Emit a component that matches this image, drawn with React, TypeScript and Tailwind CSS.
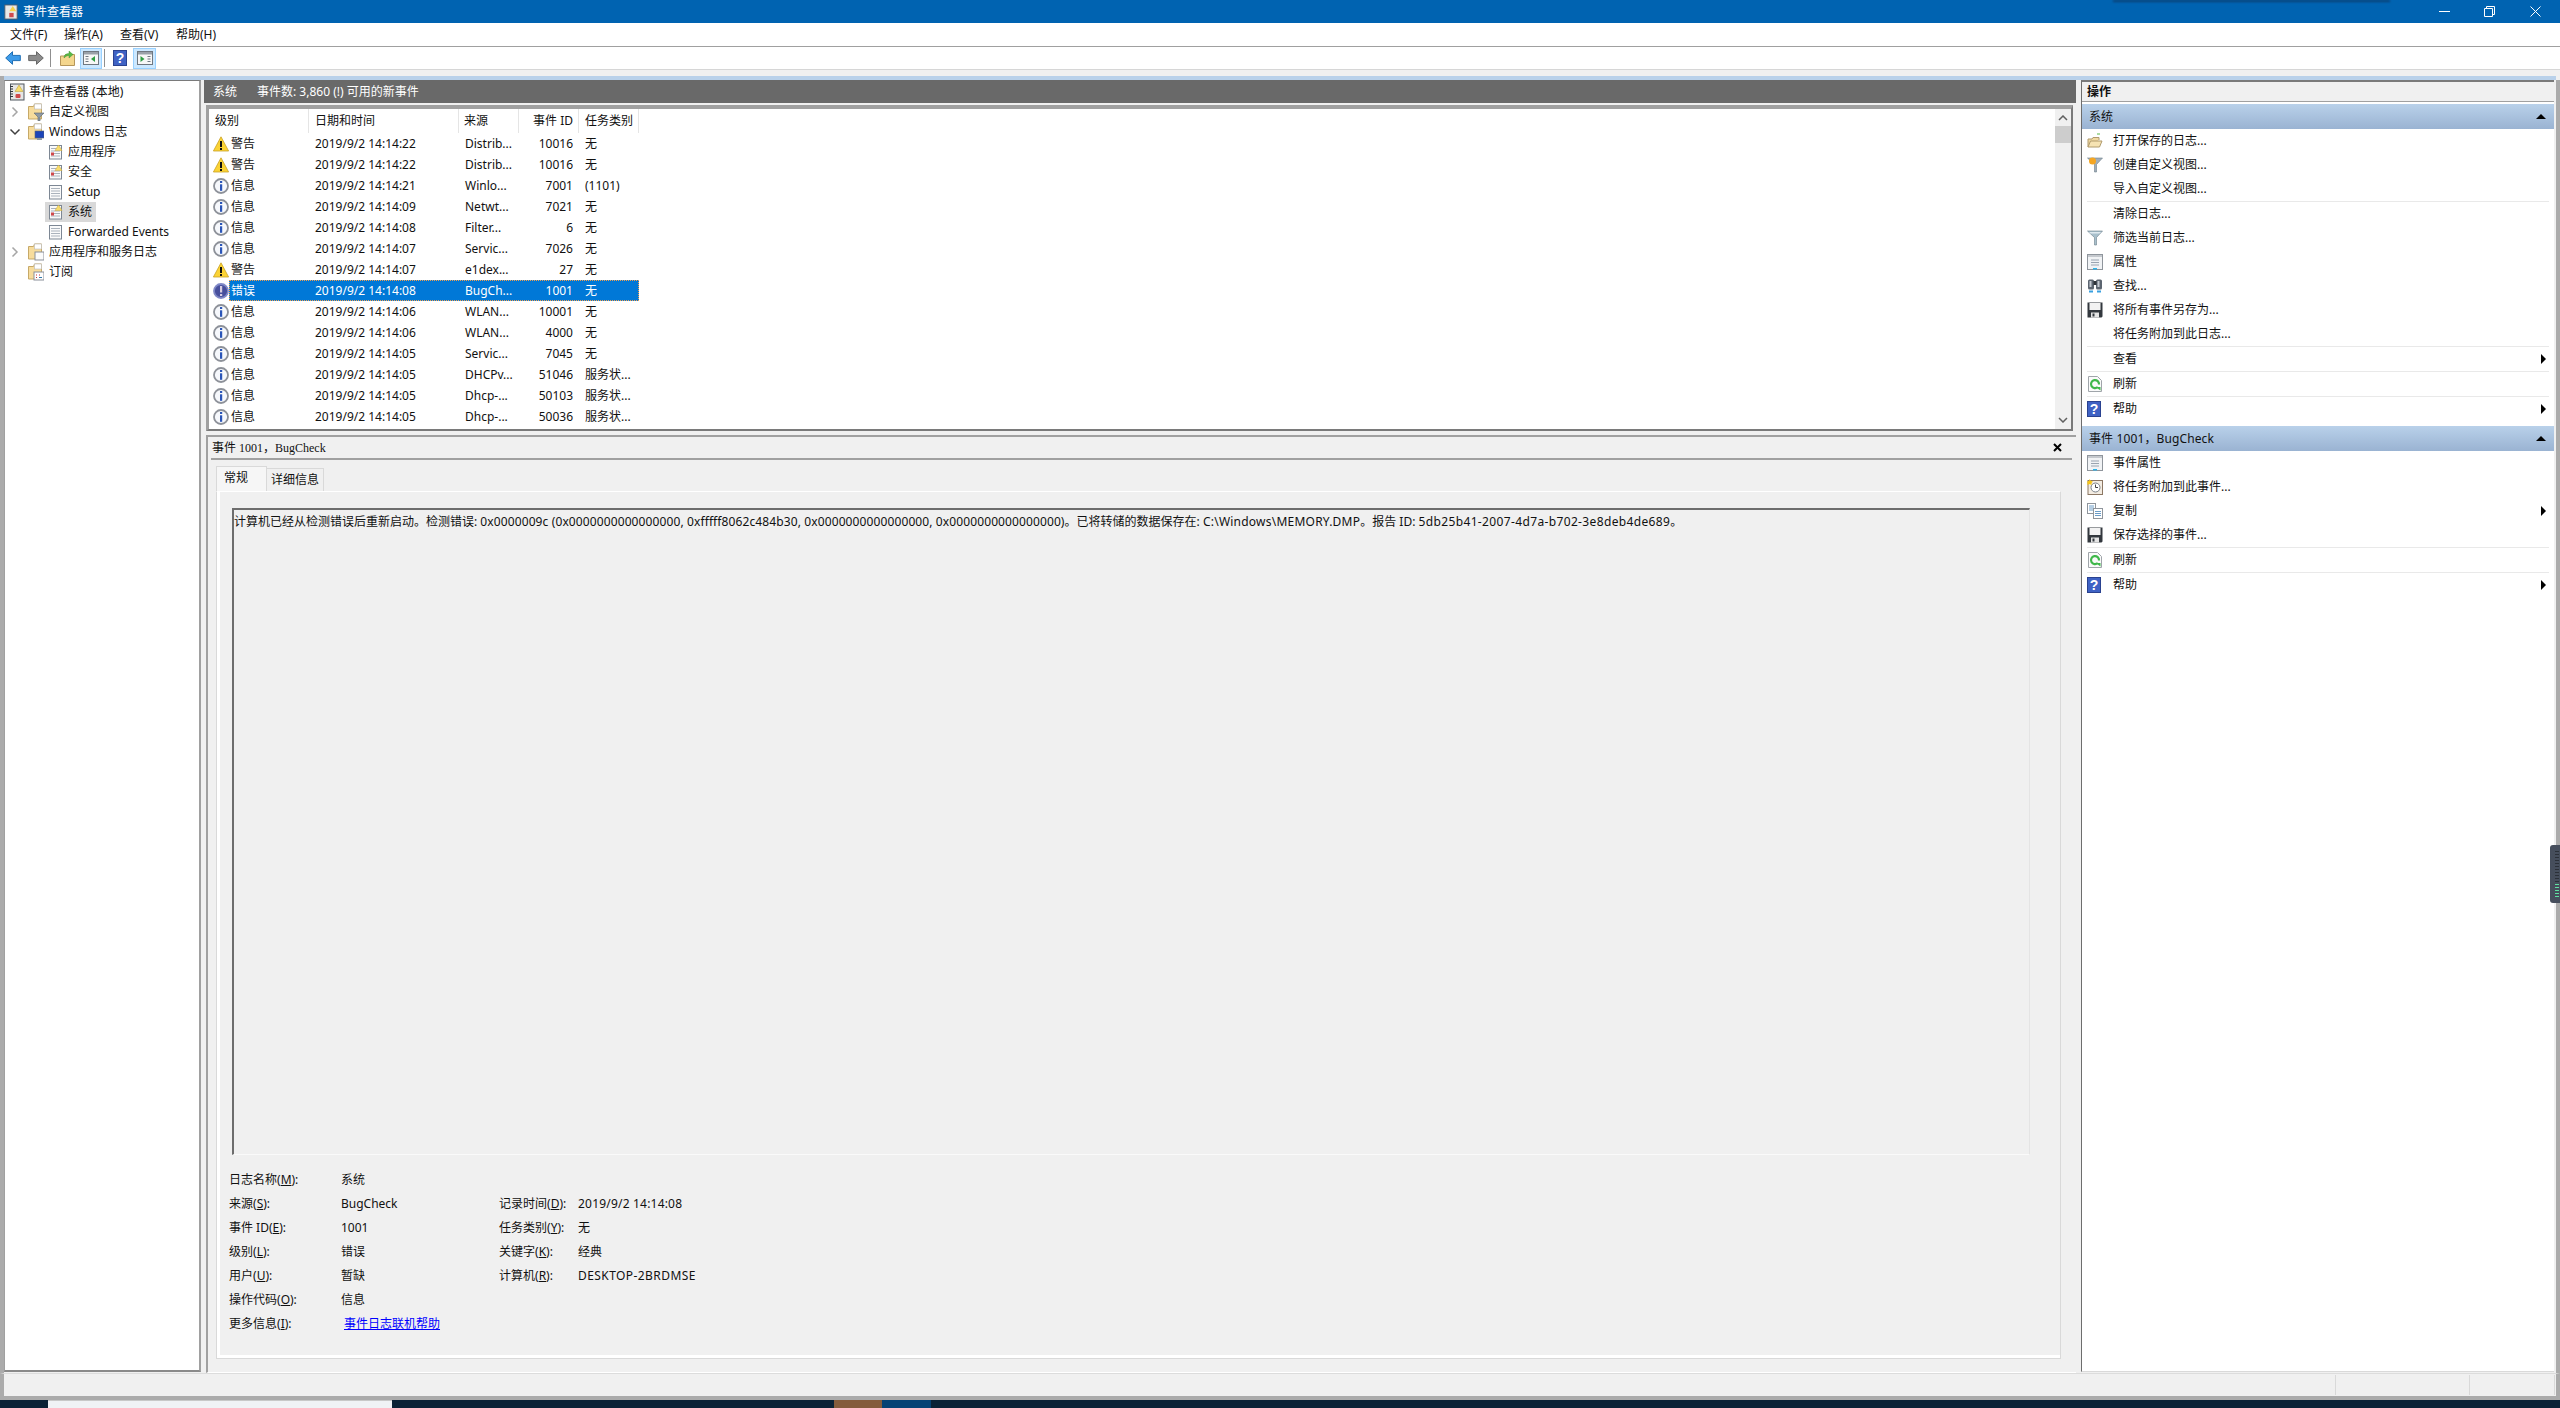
import React from 'react';

const eventRows = [
  ['warn', '警告', '2019/9/2 14:14:22', 'Distrib...', '10016', '无'],
  ['warn', '警告', '2019/9/2 14:14:22', 'Distrib...', '10016', '无'],
  ['info', '信息', '2019/9/2 14:14:21', 'Winlo...', '7001', '(1101)'],
  ['info', '信息', '2019/9/2 14:14:09', 'Netwt...', '7021', '无'],
  ['info', '信息', '2019/9/2 14:14:08', 'Filter...', '6', '无'],
  ['info', '信息', '2019/9/2 14:14:07', 'Servic...', '7026', '无'],
  ['warn', '警告', '2019/9/2 14:14:07', 'e1dex...', '27', '无'],
  ['error', '错误', '2019/9/2 14:14:08', 'BugCh...', '1001', '无'],
  ['info', '信息', '2019/9/2 14:14:06', 'WLAN...', '10001', '无'],
  ['info', '信息', '2019/9/2 14:14:06', 'WLAN...', '4000', '无'],
  ['info', '信息', '2019/9/2 14:14:05', 'Servic...', '7045', '无'],
  ['info', '信息', '2019/9/2 14:14:05', 'DHCPv...', '51046', '服务状...'],
  ['info', '信息', '2019/9/2 14:14:05', 'Dhcp-...', '50103', '服务状...'],
  ['info', '信息', '2019/9/2 14:14:05', 'Dhcp-...', '50036', '服务状...'],
];

// Icons
function WarnIcon() {
  return (
    <svg width="16" height="16" viewBox="0 0 16 16" className="shrink-0">
      <path d="M8 .8 15.6 15H.4z" fill="#fbd335" stroke="#c9a227" strokeWidth="0.8" />
      <rect x="7" y="5" width="2" height="6" fill="#111" />
      <rect x="7" y="12" width="2" height="2" fill="#111" />
    </svg>
  );
}

function InfoIcon() {
  return (
    <svg width="16" height="16" viewBox="0 0 16 16" className="shrink-0">
      <circle cx="8" cy="8" r="7" fill="#f6f8fc" stroke="#8d9199" strokeWidth="1.8" />
      <rect x="7" y="3" width="2.2" height="2" fill="#2a55b8" />
      <rect x="7" y="6.3" width="2.2" height="6.5" fill="#2a55b8" />
    </svg>
  );
}

function ErrorIcon() {
  return (
    <svg width="16" height="16" viewBox="0 0 16 16" className="shrink-0">
      <circle cx="8" cy="8" r="7" fill="#474f9c" stroke="#7f88c6" strokeWidth="1.8" />
      <rect x="7" y="3" width="2.2" height="6.5" fill="#d9cfe0" />
      <rect x="7" y="11" width="2.2" height="2" fill="#d9cfe0" />
    </svg>
  );
}

function LogIcon({ plain }: { plain?: boolean }) {
  return (
    <svg width="16" height="16" viewBox="0 0 16 16" className="shrink-0">
      <rect x="1.500" y="1.500" width="12" height="13.500" fill="#fafafa" stroke="#7d8794" />
      <path d="M3 4.500h9M3 7h9M3 9.500h9M3 12h9" stroke="#aab2bc" />
      {!plain && <path d="M10.500 1 14 6.500H7z" fill="#f8dc6c" stroke="#c7a73a" strokeWidth="0.5" />}
      {!plain && <rect x="3" y="8.500" width="3" height="3" fill="#d0494c" />}
    </svg>
  );
}

function RootIcon() {
  return (
    <svg width="16" height="18" viewBox="0 0 16 18" className="shrink-0">
      <rect x="1.500" y="1" width="13.500" height="16" fill="#e6e6e6" stroke="#4f565f" />
      <path d="M1 3.500h3M1 6h3M1 8.500h3M1 11h3M1 13.500h3" stroke="#30353b" />
      <path d="M10 2 14 8.500H6z" fill="#f8dc6c" stroke="#b59a30" strokeWidth="0.5" />
      <rect x="6.500" y="11" width="5" height="4" rx="1" fill="#d0494c" />
    </svg>
  );
}

function Folder({ overlay }: { overlay?: 'filter' | 'pc' | 'doc' | 'calendar' }) {
  return (
    <svg width="16" height="18" viewBox="0 0 16 18" className="shrink-0">
      <path d="M.5 3.500h5l1-2.500h7v15H.5z" fill="#f7dc9c" stroke="#c6a968" />
      <rect x="6.500" y="1" width="7" height="5" fill="#fff" stroke="#b9b9b9" strokeWidth="0.6" />
      {overlay === 'filter' && <path d="M6 10h10l-4 4v4h-2v-4z" fill="#8f9aa5" stroke="#5c6670" strokeWidth="0.6" />}
      {overlay === 'pc' && (
        <>
          <rect x="7" y="8" width="9" height="7" fill="#1c44b8" stroke="#5c6670" strokeWidth="0.6" />
          <rect x="9" y="15" width="5" height="2" fill="#8f9aa5" />
        </>
      )}
      {overlay === 'doc' && <rect x="7" y="9" width="9" height="8" fill="#fbfbfb" stroke="#8a8f99" />}
      {overlay === 'calendar' && (
        <>
          <rect x="6" y="9" width="10" height="8" fill="#fff" stroke="#8a8f99" />
          <path d="M8 12h1M11 12h1M8 14.500h1" stroke="#c33" />
          <path d="M11 14.500h3" stroke="#37a" />
        </>
      )}
    </svg>
  );
}

function ArrowIcon({ flip, color, edge }: { flip?: boolean; color: string; edge: string }) {
  return (
    <svg width="16" height="14" viewBox="0 0 16 14" className={flip ? 'shrink-0 -scale-x-100' : 'shrink-0'}>
      <path d="M7.500.7.7 7l6.800 6.300V9.600h7.800V4.400H7.500z" fill={color} stroke={edge} />
    </svg>
  );
}

function PaneIcon({ side }: { side: 'left' | 'right' }) {
  return (
    <svg width="16" height="14" viewBox="0 0 16 14">
      <rect x=".5" y=".5" width="15" height="13" fill="#f7f7f7" stroke="#6f7780" />
      <rect x="1" y="1" width="14" height="2.500" fill="#9aa1a9" />
      {side === 'left' ? (
        <>
          <path d="M2.500 5.500h3M2.500 8h3M2.500 10.500h3" stroke="#6f7780" />
          <path d="M12 5v6L8 8z" fill="#2f9e44" />
        </>
      ) : (
        <>
          <path d="M3.500 5v6L7.500 8z" fill="#2f9e44" />
          <path d="M10.500 5.500h3M10.500 8h3M10.500 10.500h3" stroke="#6f7780" />
        </>
      )}
    </svg>
  );
}

function HelpIcon() {
  return (
    <svg width="14" height="16" viewBox="0 0 14 16" className="shrink-0">
      <rect width="14" height="16" fill="#3f62c4" />
      <rect x=".5" y=".5" width="13" height="15" fill="none" stroke="#2a4290" />
      <text x="7" y="13" textAnchor="middle" fontSize="14" fontWeight="700" fill="#ffffff" fontFamily="Liberation Sans, sans-serif">?</text>
    </svg>
  );
}

function UpFolderIcon() {
  return (
    <svg width="15" height="16" viewBox="0 0 15 16">
      <path d="M.5 6h4l1-1.500h9v11H.5z" fill="#f4d68e" stroke="#b6965a" />
      <path d="M4 8c0-3 2-4.500 5-4.500V1l4 3.500L9 8V5.500C7 5.500 5.500 6.500 4 8z" fill="#58b947" stroke="#2f8a2a" strokeWidth="0.4" />
    </svg>
  );
}

function ActionIcon({ name }: { name?: string }) {
  if (name === 'open')
    return (
      <svg width="16" height="16" viewBox="0 0 16 16">
        <path d="M1 14V6h4l1-1.500h6V7" fill="#f0d9a2" stroke="#b09a6c" />
        <path d="M1 14 3.500 8H15l-2.500 6z" fill="#f6e3b3" stroke="#b09a6c" />
        <path d="M10 1h3" stroke="#58b947" />
      </svg>
    );
  if (name === 'custom' || name === 'filter')
    return (
      <svg width="16" height="16" viewBox="0 0 16 16">
        <path d="M.5 1h15L9.500 7.500V15H7.500V7.500z" fill={name === 'custom' ? '#a2aeb9' : '#a8c0cc'} stroke="#6d7f8c" strokeWidth="0.6" />
        {name === 'custom' ? <circle cx="5.500" cy="4" r="3.500" fill="#f5a623" /> : <path d="M2 2h12l-1.500 1.500h-9z" fill="#dfeaf0" />}
      </svg>
    );
  if (name === 'props')
    return (
      <svg width="16" height="16" viewBox="0 0 16 16">
        <rect x=".5" y=".5" width="15" height="15" fill="#f1f3f5" stroke="#8f959c" />
        <rect x="1" y="1" width="14" height="2" fill="#c5c9ce" />
        <path d="M4 6h8M4 8.500h8M4 11h8" stroke="#9aa4b0" />
        <rect x="6" y="14" width="4" height="1.500" fill="#2fb4e8" />
      </svg>
    );
  if (name === 'find')
    return (
      <svg width="16" height="16" viewBox="0 0 16 16">
        <rect x="1" y="1.500" width="6" height="10" rx="1.500" fill="#5c6570" />
        <rect x="9" y="1.500" width="6" height="10" rx="1.500" fill="#5c6570" />
        <rect x="2.500" y="3" width="2" height="6" fill="#c4cad1" />
        <rect x="10.500" y="3" width="2" height="6" fill="#c4cad1" />
        <rect x="6.500" y="3" width="3" height="4" fill="#2f343a" />
        <path d="M2 13.500h4M10 13.500h4" stroke="#38a0e0" strokeWidth="2" />
      </svg>
    );
  if (name === 'save')
    return (
      <svg width="16" height="16" viewBox="0 0 16 16">
        <path d="M.5.500h15v14l-1 1H.5z" fill="#33383e" />
        <rect x="2.500" y="1" width="11" height="7" fill="#f2f2f2" />
        <rect x="4" y="10.500" width="8" height="5" fill="#e4e4e4" />
        <rect x="5.500" y="11.500" width="2" height="3" fill="#33383e" />
      </svg>
    );
  if (name === 'refresh')
    return (
      <svg width="16" height="16" viewBox="0 0 16 16">
        <path d="M1.500.500h9l4 4v11h-13z" fill="#fafafa" stroke="#a0a5aa" />
        <path d="M10.800 11A4 4 0 1 1 12 8.500" fill="none" stroke="#3fb84a" strokeWidth="2.200" />
        <path d="M8.500 11h5v3.500z" fill="#3fb84a" />
      </svg>
    );
  if (name === 'help') return <HelpIcon />;
  if (name === 'task')
    return (
      <svg width="16" height="16" viewBox="0 0 16 16">
        <rect x="1" y="1.500" width="14.500" height="14" fill="#f3ece2" stroke="#8c7763" />
        <circle cx="8.500" cy="8.500" r="4.500" fill="#fff" stroke="#7a8087" />
        <path d="M8.500 5.500v3h2.500" fill="none" stroke="#444" />
        <path d="M2.500 0 4 2l2 .500-1.500 1.500.200 2-2.200-1-2.200 1 .200-2L0 2.500 2 2z" fill="#f5c518" />
      </svg>
    );
  if (name === 'copy')
    return (
      <svg width="16" height="16" viewBox="0 0 16 16">
        <rect x=".5" y=".5" width="8" height="10" fill="#fff" stroke="#8f959c" />
        <path d="M2 3h5M2 5h5M2 7h5" stroke="#6a9cc7" />
        <rect x="6.500" y="5.500" width="9" height="10" fill="#fff" stroke="#8f959c" />
        <path d="M8 8.500h6M8 10.500h6M8 12.500h6" stroke="#6a9cc7" />
      </svg>
    );
  return null;
}

function ActionItem({ icon, label, submenu }: { icon?: string; label: string; submenu?: boolean }) {
  return (
    <div className="h-6 flex items-center pl-[5px] pr-[8px] pb-[1px]">
      <div className="w-[26px] h-4 flex">
        <ActionIcon name={icon} />
      </div>
      <span className="flex-1">{label}</span>
      {submenu && <div className="w-0 h-0 border-y-[5px] border-y-transparent border-l-[5px] border-l-black" />}
    </div>
  );
}

function Sep() {
  return <div className="h-px mx-[5px] bg-[#e9e9e9]" />;
}

function GroupHeader({ label }: { label: string }) {
  return (
    <div className="h-[25px] flex items-center justify-between pl-[7px] pr-[8px] bg-gradient-to-b from-[#b9d1ea] to-[#9ab3d2]">
      <span className="tracking-[0.12px]">{label}</span>
      <div className="w-0 h-0 border-x-[5px] border-x-transparent border-b-[5px] border-b-black" />
    </div>
  );
}

function TreeRow({ left, gap = 5, chevron, icon, label, selected }: { left: number; gap?: number; chevron?: 'right' | 'down'; icon: React.ReactNode; label: string; selected?: boolean }) {
  if (selected) {
    return (
      <div className="h-5 flex">
        <div className="shrink-0" style={{ width: left - 3 }} />
        <div className="h-5 flex items-center pl-[3px] pr-[4px] bg-[#d9d9d9]">
          <div className="w-[16px] h-[18px] flex items-center shrink-0">{icon}</div>
          <span style={{ marginLeft: gap }}>{label}</span>
        </div>
      </div>
    );
  }
  return (
    <div className="h-5 flex items-center">
      <div className="shrink-0 flex justify-end items-center" style={{ width: left }}>
        {chevron === 'right' && (
          <svg width="8" height="12" viewBox="0 0 8 12" className="mr-[9px]">
            <path d="M1.500 1.500 6 6l-4.500 4.500" fill="none" stroke="#a6a6a6" strokeWidth="1.500" />
          </svg>
        )}
        {chevron === 'down' && (
          <svg width="12" height="8" viewBox="0 0 12 8" className="mr-[7px]">
            <path d="M1.500 1.500 6 6l4.500-4.500" fill="none" stroke="#404040" strokeWidth="1.500" />
          </svg>
        )}
      </div>
      <div className="w-[16px] h-[18px] flex items-center shrink-0">{icon}</div>
      <span style={{ marginLeft: gap }}>{label}</span>
    </div>
  );
}

function MetaLabel({ text, hotkey }: { text: string; hotkey: string }) {
  return (
    <span>
      {text}(<u>{hotkey}</u>):
    </span>
  );
}

export default function App() {
  return (
    <div className="relative w-[2560px] h-[1408px] overflow-hidden flex flex-col bg-[#f0f0f0] text-[12px] leading-[16px] text-[#111] font-['Noto_Sans','Noto_Sans_CJK_SC',sans-serif]">
      {/* Title bar */}
      <div className="h-[23px] bg-[#0063b1] flex items-center text-white shrink-0">
        <div className="w-[23px] pl-[4px]">
          <svg width="14" height="16" viewBox="0 0 16 18">
            <rect x="1" y="1" width="14" height="16" fill="#e8e8e8" stroke="#555c66" />
            <path d="M10 2 14 8H6z" fill="#f6d24a" />
            <rect x="6" y="10" width="5" height="5" fill="#d0494c" />
          </svg>
        </div>
        <span>事件查看器</span>
        <div className="flex-1" />
        <svg width="11" height="11" viewBox="0 0 11 11" className="mr-[34px]">
          <path d="M0 5.500h11" stroke="#fff" />
        </svg>
        <svg width="11" height="11" viewBox="0 0 11 11" className="mr-[35px]">
          <path d="M.5 2.500h8v8h-8zM2.500 2.500v-2h8v8h-2" fill="none" stroke="#fff" />
        </svg>
        <svg width="11" height="11" viewBox="0 0 11 11" className="mr-[19px]">
          <path d="M.5.500l10 10M10.500.500l-10 10" stroke="#fff" />
        </svg>
      </div>

      {/* Menu bar */}
      <div className="h-6 bg-white border-b border-[#a0a0a0] flex items-center pl-[10px] shrink-0">
        <span className="w-[54px]">文件(F)</span>
        <span className="w-[56px]">操作(A)</span>
        <span className="w-[56px]">查看(V)</span>
        <span>帮助(H)</span>
      </div>

      {/* Toolbar */}
      <div className="h-[23px] bg-white border-b border-[#d6d6d6] flex items-center pl-[5px] shrink-0">
        <ArrowIcon color="#3d9be9" edge="#1f6fb5" />
        <div className="w-[7px]" />
        <ArrowIcon flip color="#8c8c8c" edge="#666666" />
        <div className="w-px h-[18px] ml-[6px] bg-[#8f8f8f]" />
        <div className="w-[15px] ml-[9px]">
          <UpFolderIcon />
        </div>
        <div className="w-[22px] h-[21px] ml-[5px] flex items-center justify-center bg-[#cce8ff] border border-[#99d1ff]">
          <PaneIcon side="left" />
        </div>
        <div className="w-px h-[18px] ml-[2px] bg-[#8f8f8f]" />
        <div className="w-[14px] ml-[8px]">
          <HelpIcon />
        </div>
        <div className="w-[23px] h-[21px] ml-[6px] flex items-center justify-center bg-[#cce8ff] border border-[#99d1ff]">
          <PaneIcon side="right" />
        </div>
      </div>

      <div className="h-[6px] shrink-0" />
      <div className="h-1 bg-[#b9d1ea] mr-1 shrink-0 border-l-4 border-l-[#ababab]" />

      {/* Main panes */}
      <div className="flex flex-1 min-h-0">
        <div className="w-1 bg-[#ababab] shrink-0" />

        {/* Tree */}
        <div className="w-[197px] h-[1292px] shrink-0 bg-white border-t border-t-[#7a7a7a] border-r-2 border-r-[#a0a0a0] border-b-2 border-b-[#8a8a8a] border-l border-l-[#a0a0a0] pt-[1px]">
          <TreeRow left={4} gap={4} icon={<RootIcon />} label="事件查看器 (本地)" />
          <TreeRow left={23} chevron="right" icon={<Folder overlay="filter" />} label="自定义视图" />
          <TreeRow left={23} chevron="down" icon={<Folder overlay="pc" />} label="Windows 日志" />
          <TreeRow left={43} gap={4} icon={<LogIcon />} label="应用程序" />
          <TreeRow left={43} gap={4} icon={<LogIcon />} label="安全" />
          <TreeRow left={43} gap={4} icon={<LogIcon plain />} label="Setup" />
          <TreeRow left={43} gap={4} icon={<LogIcon />} label="系统" selected />
          <TreeRow left={43} gap={4} icon={<LogIcon plain />} label="Forwarded Events" />
          <TreeRow left={23} chevron="right" icon={<Folder overlay="doc" />} label="应用程序和服务日志" />
          <TreeRow left={23} icon={<Folder overlay="calendar" />} label="订阅" />
        </div>

        <div className="w-[3px] shrink-0" />

        {/* Center */}
        <div className="w-[1872px] shrink-0 flex flex-col">
          <div className="h-[23px] bg-[#696969] text-white flex items-center pl-[9px] shrink-0">
            <span className="w-[44px]">系统</span>
            <span>事件数: 3,860 (!) 可用的新事件</span>
          </div>

          {/* Event list */}
          <div className="h-[326px] mt-[2px] ml-[2px] mr-[3px] shrink-0 flex bg-white border-t-4 border-l-[3px] border-r-2 border-b-2 border-t-[#a0a0a0] border-l-[#a0a0a0] border-r-[#7a7a7a] border-b-[#7a7a7a]">
            <div className="flex-1 overflow-hidden">
              <div className="flex h-6 items-center">
                <div className="w-[100px] h-full flex items-center pl-[6px] border-r border-[#e5e5e5]">级别</div>
                <div className="w-[150px] h-full flex items-center pl-[6px] border-r border-[#e5e5e5]">日期和时间</div>
                <div className="w-[60px] h-full flex items-center pl-[5px] border-r border-[#e5e5e5]">来源</div>
                <div className="w-[60px] h-full flex items-center justify-end pr-[5px] border-r border-[#e5e5e5]">事件 ID</div>
                <div className="w-[60px] h-full flex items-center pl-[6px] border-r border-[#e5e5e5]">任务类别</div>
              </div>
              {eventRows.map((r, i) => (
                <div key={i} className="flex h-[21px] items-center">
                  <div className="w-[20px] pl-1 flex">
                    {r[0] === 'warn' ? <WarnIcon /> : r[0] === 'error' ? <ErrorIcon /> : <InfoIcon />}
                  </div>
                  <div className={r[0] === 'error' ? 'w-[410px] h-full flex items-center bg-[#0078d7] text-white outline-1 outline-dotted -outline-offset-1 outline-[#f0a050]' : 'w-[410px] h-full flex items-center'}>
                    <span className="w-[80px] pl-[2px]">{r[1]}</span>
                    <span className="w-[150px] pl-[6px]">{r[2]}</span>
                    <span className="w-[60px] pl-[6px]">{r[3]}</span>
                    <span className="w-[60px] pr-[6px] text-right">{r[4]}</span>
                    <span className="w-[60px] pl-[6px]">{r[5]}</span>
                  </div>
                </div>
              ))}
              {/* next row is scrolled almost out of view, only the icon tip shows */}
              <div className="flex h-[21px] items-center">
                <div className="w-[20px] pl-1 flex">
                  <InfoIcon />
                </div>
              </div>
            </div>
            <div className="w-4 h-full bg-[#f0f0f0] flex flex-col items-center shrink-0">
              <svg width="10" height="6" viewBox="0 0 10 6" className="mt-[6px]">
                <path d="M1 5 5 1l4 4" fill="none" stroke="#606060" strokeWidth="1.500" />
              </svg>
              <div className="w-full h-[17px] mt-[5px] bg-[#cdcdcd]" />
              <div className="flex-1" />
              <svg width="10" height="6" viewBox="0 0 10 6" className="mb-[6px]">
                <path d="M1 1l4 4 4-4" fill="none" stroke="#606060" strokeWidth="1.500" />
              </svg>
            </div>
          </div>

          {/* Detail */}
          <div className="flex-1 mt-1 ml-[2px] flex flex-col border-t-2 border-l-2 border-[#a0a0a0] border-b border-b-white">
            <div className="h-[21px] flex items-center justify-between pl-[4px] pr-[14px] shrink-0 font-['Liberation_Serif','Noto_Sans_CJK_SC',serif]">
              <span>事件 1001，BugCheck</span>
              <svg width="9" height="9" viewBox="0 0 9 9">
                <path d="M1 1l7 7M8 1 1 8" stroke="#000" strokeWidth="2" />
              </svg>
            </div>
            <div className="h-[2px] ml-[3px] mr-[4px] bg-[#a0a0a0] shrink-0" />
            <div className="flex h-[25px] ml-2 mt-[6px] shrink-0 items-end">
              <div className="w-[51px] h-[25px] pl-[7px] pt-[3px] border border-[#d9d9d9] border-b-0 bg-[#f6f6f6]">常规</div>
              <div className="w-[57px] h-[23px] pl-[4px] pt-[3px] border border-[#d9d9d9] border-l-0 border-b-0">详细信息</div>
            </div>
            <div className="h-[868px] ml-2 w-[1845px] border border-[#d9d9d9] border-t-white">
              <div className="h-full border-l-[3px] border-b-[3px] border-white pt-[16px] pl-[12px]">
                <div className="w-[1798px] h-[647px] border-t-2 border-l-2 border-t-[#6d6d6d] border-l-[#6d6d6d] border-r border-b border-r-[#e4e4e4] border-b-[#fafafa] pt-[4px]">
                  计算机已经从检测错误后重新启动。检测错误:{' '}
                  <span className="tracking-[0.11px]">0x0000009c (0x0000000000000000, 0xfffff8062c484b30, 0x0000000000000000, 0x0000000000000000)</span>
                  。已将转储的数据保存在:{' '}
                  <span className="tracking-[0.23px]">C:\Windows\MEMORY.DMP</span>
                  。报告 ID:{' '}
                  <span className="tracking-[0.36px]">5db25b41-2007-4d7a-b702-3e8deb4de689</span>。
                </div>
                <div className="grid grid-cols-[112px_158px_79px_1fr] auto-rows-[24px] items-center mt-[13px] ml-[-3px]">
                  <MetaLabel text="日志名称" hotkey="M" />
                  <span>系统</span>
                  <span />
                  <span />
                  <MetaLabel text="来源" hotkey="S" />
                  <span>BugCheck</span>
                  <MetaLabel text="记录时间" hotkey="D" />
                  <span className="tracking-[0.2px]">2019/9/2 14:14:08</span>
                  <MetaLabel text="事件 ID" hotkey="E" />
                  <span>1001</span>
                  <MetaLabel text="任务类别" hotkey="Y" />
                  <span>无</span>
                  <MetaLabel text="级别" hotkey="L" />
                  <span>错误</span>
                  <MetaLabel text="关键字" hotkey="K" />
                  <span>经典</span>
                  <MetaLabel text="用户" hotkey="U" />
                  <span>暂缺</span>
                  <MetaLabel text="计算机" hotkey="R" />
                  <span className="tracking-[0.43px]">DESKTOP-2BRDMSE</span>
                  <MetaLabel text="操作代码" hotkey="O" />
                  <span>信息</span>
                  <span />
                  <span />
                  <MetaLabel text="更多信息" hotkey="I" />
                  <span className="pl-[3px] text-[#0000ff] underline">事件日志联机帮助</span>
                  <span />
                  <span />
                </div>
              </div>
            </div>
          </div>
        </div>

        <div className="w-[5px] shrink-0" />

        {/* Actions */}
        <div className="w-[473px] h-[1292px] shrink-0 flex flex-col bg-white border-t-2 border-l border-t-[#7a7a7a] border-l-[#6d6d6d] border-b border-b-[#d9d9d9]">
          <div className="h-[20px] bg-[#f0f0f0] border-b border-[#a0a0a0] flex items-center pl-[5px] font-bold shrink-0">操作</div>
          <div className="h-[2px] shrink-0" />
          <GroupHeader label="系统" />
          <ActionItem icon="open" label="打开保存的日志..." />
          <ActionItem icon="custom" label="创建自定义视图..." />
          <ActionItem label="导入自定义视图..." />
          <Sep />
          <ActionItem label="清除日志..." />
          <ActionItem icon="filter" label="筛选当前日志..." />
          <ActionItem icon="props" label="属性" />
          <ActionItem icon="find" label="查找..." />
          <ActionItem icon="save" label="将所有事件另存为..." />
          <ActionItem label="将任务附加到此日志..." />
          <Sep />
          <ActionItem label="查看" submenu />
          <Sep />
          <ActionItem icon="refresh" label="刷新" />
          <Sep />
          <ActionItem icon="help" label="帮助" submenu />
          <div className="h-[5px] shrink-0" />
          <GroupHeader label="事件 1001，BugCheck" />
          <ActionItem icon="props" label="事件属性" />
          <ActionItem icon="task" label="将任务附加到此事件..." />
          <ActionItem icon="copy" label="复制" submenu />
          <ActionItem icon="save" label="保存选择的事件..." />
          <Sep />
          <ActionItem icon="refresh" label="刷新" />
          <Sep />
          <ActionItem icon="help" label="帮助" submenu />
        </div>

        <div className="w-[2px] shrink-0" />
        <div className="w-1 bg-[#ababab] shrink-0" />
      </div>

      {/* Status bar */}
      <div className="h-[23px] shrink-0 flex border-t border-[#dcdcdc] border-l-4 border-l-[#ababab] border-r-4 border-r-[#ababab]">
        <div className="w-[2331px]" />
        <div className="w-[134px] my-[1px] border-l border-[#d9d9d9]" />
        <div className="w-[85px] my-[1px] border-l border-[#d9d9d9]" />
        <div className="my-[1px] border-l border-[#d9d9d9]" />
      </div>
      <div className="h-1 bg-[#ababab] shrink-0" />

      {/* Taskbar, only its top edge is on screen */}
      <div className="h-2 bg-[#0a2236] flex overflow-hidden shrink-0">
        <div className="w-[48px]" />
        <div className="w-[344px] bg-[#f0f2f5] border-t border-[#c8c8c8]" />
        <div className="w-[442px]" />
        <div className="w-[48px] bg-[#845c3c]" />
        <div className="w-[49px] bg-[#054274]" />
        <div className="w-[1524px]" />
        <span className="text-white pt-[5px] leading-[16px]">14:38</span>
      </div>

      {/* Shadow from a window above, and the docked widget */}
      <div className="absolute left-[2113px] top-0 w-[277px] h-[2px] bg-[#0b3f73] blur-[1px]" />
      <div className="absolute left-[2550px] top-[845px] w-[10px] h-[58px] rounded-l-[3px] bg-[#464e5c] flex flex-col items-center gap-[2px] pt-[6px] pl-[3px]">
        {[...Array(11)].map((_, i) => (
          <div key={i} className="w-[4px] h-px bg-[#2b3038]" />
        ))}
        {[...Array(5)].map((_, i) => (
          <div key={i} className="w-[4px] h-px bg-[#5fe0a0]" />
        ))}
      </div>
    </div>
  );
}
